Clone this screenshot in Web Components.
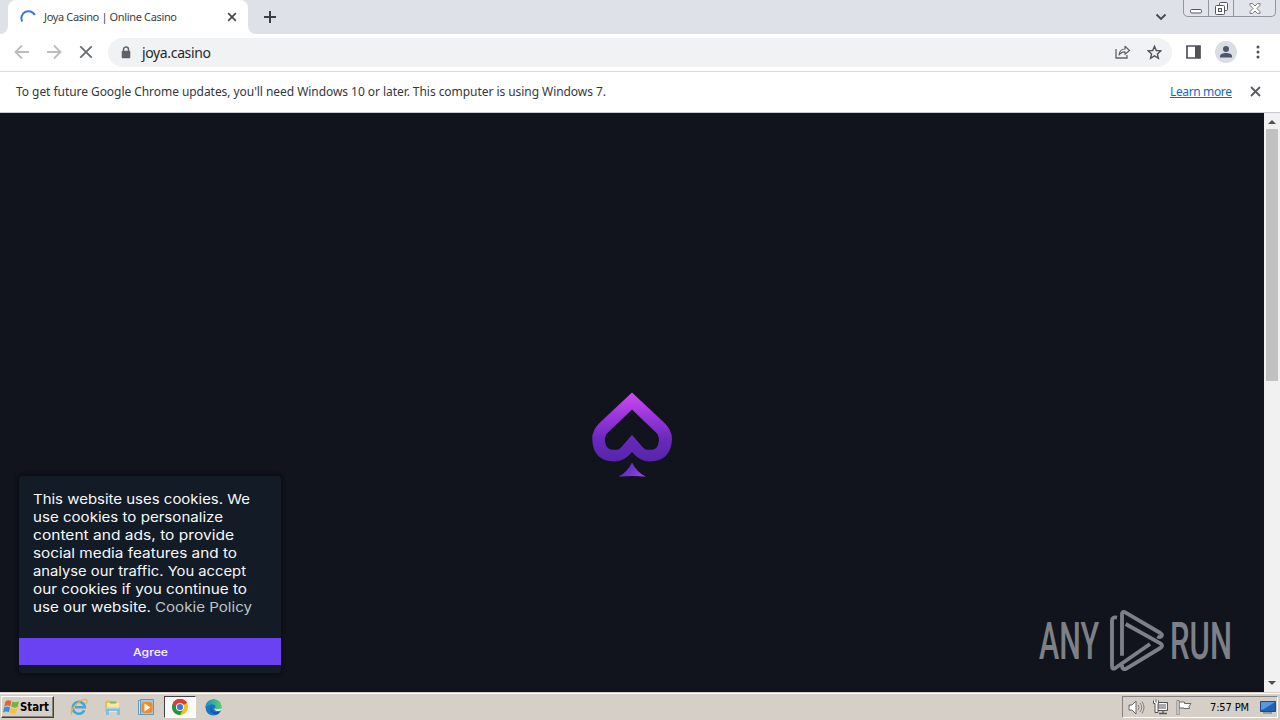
<!DOCTYPE html>
<html lang="en">
<head>
<meta charset="utf-8">
<title>Joya Casino | Online Casino</title>
<style>
  body {
    margin: 0;
    width: 1280px;
    height: 720px;
    overflow: hidden;
    font-family: "Noto Sans", sans-serif;
  }
</style>
</head>
<body>
<desktop-screen></desktop-screen>

<script>
(() => {
  const define = (name, html, setup) => {
    const template = document.createElement("template");
    template.innerHTML = html;
    customElements.define(name, class extends HTMLElement {
      constructor() {
        super();
        this.attachShadow({ mode: "open" });
      }
      connectedCallback() {
        if (this.shadowRoot.childNodes.length) return;
        this.shadowRoot.appendChild(template.content.cloneNode(true));
        if (setup) setup(this, this.shadowRoot);
      }
    });
  };

  // One line of text set to an exact width
  define("fit-text", `
<style>
  :host { display: block; flex: none; }
  svg { display: block; overflow: visible; }
  text { fill: currentColor; }
</style>
<svg><text x="0"></text></svg>
`, (host, root) => {
    const width = host.getAttribute("width");
    const height = host.getAttribute("height") ?? "18";
    const svg = root.querySelector("svg");
    svg.setAttribute("width", width);
    svg.setAttribute("height", height);
    const text = root.querySelector("text");
    text.setAttribute("y", host.getAttribute("base") ?? "13");
    text.setAttribute("textLength", width);
    text.setAttribute("lengthAdjust", host.hasAttribute("stretch") ? "spacingAndGlyphs" : "spacing");
    text.textContent = host.getAttribute("text");
  });

  const icons = {
    spinner: [16, 16, `<path d="M2.200 12.500A7 7 0 0 1 14.800 6" fill="none" stroke="#3b78d8" stroke-width="2"/>`],
    tabClose: [10, 10, `<path d="M1.200 1.200l7.600 7.600M8.800 1.200L1.200 8.800" stroke="#45484d" stroke-width="1.700"/>`],
    plus: [12, 12, `<path d="M6 0v12M0 6h12" stroke="#3c4043" stroke-width="2"/>`],
    chevron: [12, 8, `<path d="M1.500 1.500L6 6l4.500-4.500" fill="none" stroke="#45484d" stroke-width="1.900"/>`],
    back: [16, 16, `<path d="M15 8H2M8 1.500L1.500 8L8 14.500" fill="none" stroke="#babcbe" stroke-width="1.800"/>`],
    forward: [16, 16, `<path d="M1 8h13M8 1.500L14.500 8L8 14.500" fill="none" stroke="#babcbe" stroke-width="1.800"/>`],
    stop: [14, 14, `<path d="M1.300 1.300l11.400 11.400M12.700 1.300L1.300 12.700" stroke="#6a6d71" stroke-width="1.900"/>`],
    lock: [10, 13, `<path d="M2.500 6V3.500a2.500 2.500 0 0 1 5 0V6" fill="none" stroke="#5f6368" stroke-width="1.500"/><rect x=".7" y="4.800" width="8.600" height="7.400" rx="1" fill="#5f6368"/>`],
    share: [16, 14, `<path d="M1 4v9h11v-3" fill="none" stroke="#5f6368" stroke-width="1.300"/><path d="M4 10C4.400 6 6.500 4 10 4V1.300L14.500 5.500L10 9.300V6.800C7.500 6.800 5.500 7.700 4 10z" fill="none" stroke="#5f6368" stroke-width="1.200" stroke-linejoin="round"/>`],
    star: [15, 15, `<path d="M7.500 1.300l1.800 4.200 4.500.4-3.400 3 1 4.400-3.900-2.400-3.900 2.400 1-4.400-3.400-3 4.500-.4z" fill="none" stroke="#505459" stroke-width="1.400"/>`],
    panel: [15, 14, `<path d="M1 1h13v12H1z" fill="none" stroke="#505255" stroke-width="1.700"/><path d="M9 1h5v12H9z" fill="#505255"/>`],
    avatar: [22, 22, `<circle cx="11" cy="11" r="11" fill="#dadde1"/><circle cx="11" cy="8" r="3" fill="#4b5570"/><path d="M5 16.500v-1.200c0-2 3-3.200 6-3.200s6 1.200 6 3.200v1.200z" fill="#4b5570"/>`],
    dots: [4, 14, `<g fill="#505357"><circle cx="2" cy="2" r="1.500"/><circle cx="2" cy="7" r="1.500"/><circle cx="2" cy="12" r="1.500"/></g>`],
    barClose: [11, 11, `<path d="M1 1l9 9M10 1l-9 9" stroke="#5a5d61" stroke-width="1.900"/>`],
    minimise: [12, 6, `<rect x=".5" y=".5" width="11" height="3.500" rx="1.300" fill="#fff" stroke="#53565c"/>`],
    restore: [13, 13, `<rect x="4.500" y=".5" width="8" height="8" rx="1" fill="#f5f6f8" stroke="#53565c"/><rect x=".5" y="3.500" width="9" height="9" rx="1" fill="#fff" stroke="#53565c"/><rect x="3.500" y="6.500" width="3" height="3" fill="#e0e3e9" stroke="#53565c"/>`],
    winClose: [12, 11, `<path d="M1 .6h2.500L6 3 8.500.6H11v1.700L8 5.500l3 3.200v1.700H8.500L6 8l-2.500 2.400H1V8.700l3-3.200-3-3.200z" fill="#fff" stroke="#686b71" stroke-width=".9"/>`],
    up: [8, 4, `<path d="M4 0l4 4H0z" fill="#505050"/>`],
    down: [8, 4, `<path d="M0 0h8L4 4z" fill="#505050"/>`],
    spade: [84, 90, `
      <defs>
        <linearGradient id="g" x1="0" y1="0" x2="0" y2="1"><stop offset="0" stop-color="#cf4af2"/><stop offset=".35" stop-color="#9a35dc"/><stop offset=".68" stop-color="#6929bd"/><stop offset="1" stop-color="#5525a8"/></linearGradient>
        <linearGradient id="s" x1="0" y1="0" x2="1" y2=".5"><stop offset="0" stop-color="#4f35bd"/><stop offset=".5" stop-color="#6731cd"/><stop offset="1" stop-color="#9540df"/></linearGradient>
      </defs>
      <path fill="url(#g)" fill-rule="evenodd" d="M42 2.500L74 32.500Q82 40 82 49Q81 71 60 71.500Q49.500 71.500 42 62Q34.500 71.500 24 71.500Q3 71 2.200 49Q2 40 10 32.500zM42 19.500L18 42.500Q14.800 45.500 14.800 50Q15.500 59.500 22 59.800H27Q29 59.800 31 57.500L42 45L53 57.500Q55 59.800 57 59.800H62Q68.500 59.500 69 50Q69 45.500 66 42.500z"/>
      <path fill="url(#s)" d="M42 72.500Q47 82.500 56 86.800Q42 85 28.500 86.800Q37 82.500 42 72.500z"/>`],
    play: [75, 70, `<g transform="scale(.33333)" fill="none" stroke="#7d8087" stroke-width="11.500" stroke-linejoin="round"><path d="M66 152V28Q66 16 77 23L181 84Q190 90 183 95Q179 98 172 94"/><path d="M51 38Q36 35 36 47V183Q36 195 46 189L150 117"/><path d="M77 57L181 115Q191 122 181 129L79 191Q65 196 66 180"/></g>`],
    windows: [17, 16, `<path d="M2.500 2.500Q5 .5 8.300 2L7.300 7.200Q4 5.500 1.200 7.500z" fill="#e9622d"/><path d="M9.300 2.500Q12 4 16 2.500L14.600 8Q11 9.500 8.200 7.600z" fill="#72b53e"/><path d="M1 8.500Q4 6.700 7 8.300L6 13.300Q3 11.700 0 13.500z" fill="#3c8fdc"/><path d="M8 8.700Q11 10.300 14.300 9.200L13 14.200Q10 15.800 7 14z" fill="#f7c42c"/>`],
    ie: [18, 18, `<path d="M14.300 12.300A6 6 0 1 1 14.800 9.300H5" fill="none" stroke="#42a5dc" stroke-width="2.500"/><path d="M2 16.500C-1.500 13 11-1 16.500 1.800Q17.800 3 15.800 5.800" fill="none" stroke="#e2b641" stroke-width="1.300"/>`],
    folder: [17, 17, `<path d="M1 3Q1 1.500 2.500 1.500H6L7.500 3H13V13H1z" fill="#e7bd57"/><path d="M3 4h12v9H3z" fill="#fae69d"/><path d="M6 2.500h6v2H6z" fill="#76bd62"/><path d="M2 8.500h14V16h-3v-4H5v4H2z" fill="#80bfdf"/><path d="M2.500 9h13" stroke="#c5e7f5"/>`],
    media: [16, 17, `<path d="M.5 1.500h12v14H.5z" fill="#d2e9f8" stroke="#599bc9"/><path d="M2.500.5h13v15h-13z" fill="#9acbed" stroke="#5c9ac6"/><rect x="3.500" y="3" width="11" height="11" rx="3" fill="#f48b20"/><path d="M6.500 4.500l6 4-6 4z" fill="#fff"/>`],
    chrome: [16, 16, `<circle cx="8" cy="8" r="8" fill="#fbc116"/><path d="M8 8L1.070 4A8 8 0 0 1 14.930 4z" fill="#e33b2e"/><path d="M1.070 4A8 8 0 0 0 8 16l3.500-6L8 8z" fill="#229447"/><path d="M8 4h6.930A8 8 0 0 0 1.070 4l3.500 6z" fill="#e33b2e"/><circle cx="8" cy="8" r="4" fill="#fff"/><circle cx="8" cy="8" r="3.100" fill="#3978dd"/>`],
    edge: [17, 17, `<defs><linearGradient id="e"><stop stop-color="#178fd3"/><stop offset="1" stop-color="#5bd15b"/></linearGradient></defs><circle cx="8.500" cy="8.500" r="8" fill="#1976c5"/><path d="M.5 8.500C.500-2 16.500-2 16.500 7.500c0 3.500-4.500 4-6.500 2.500C12 7 9 4.800 6 5.500 3.500 6 1.500 7 .5 8.500z" fill="url(#e)"/><path d="M6.500 7C5.300 11.500 9 14.500 15 12.500c-.7 1-1.300 2-2.500 2.700C7 15.500 3.500 11.500 6.500 7z" fill="#1a52a5"/><path d="M9.500 6.700c2 .8 1.800 2-.2 3.300 1 2.300 4 2.600 6.700 1.200l1-1.400h-2c-2 .6-4 .5-5 .2 1.500-1.500 1-2.800-.5-3.300z" fill="#eef2f3"/>`],
    speaker: [17, 15, `<path d="M1 5h3l4-4v13l-4-4H1z" fill="#fff" stroke="#686868"/><path d="M10 5q2 2.500 0 5M12 3q3.500 4.500 0 9M14 1.500q4 6 0 12" fill="none" stroke="#777" stroke-width=".9"/>`],
    network: [17, 16, `<path d="M4.500 3.500h11v8h-11z" fill="#a9a9a9" stroke="#555"/><path d="M5.500 4.500h9v6h-9z" fill="none" stroke="#fff"/><path d="M7 14.500h8M11 12v2" stroke="#555" stroke-width="1.300"/><path d="M1.500 1.500v3H3v9h3v-9h.5v-3M4 .5v3" fill="#fff" stroke="#555"/>`],
    flag: [17, 15, `<path d="M3 2h5.500v1.500H15l-2 3 .5 2H8V8H3z" fill="#fff" stroke="#686868"/><path d="M1 .5h2V15H1z" fill="#fff" stroke="#686868" stroke-width=".8"/>`],
    desktop: [16, 14, `<path d="M.5 1.500h15v10H.5z" fill="#2262b5" stroke="#204a7d"/><path d="M1 2h14L4 9 1 10z" fill="#5799dc"/><path d="M3 13h9" stroke="#74818d" stroke-width="1.300"/>`],
  };

  define("ui-icon", `
<style>
  :host { display: block; flex: none; }
  svg { display: block; }
</style>
`, (host, root) => {
    const [w, h, shapes] = icons[host.getAttribute("name")];
    const holder = document.createElement("div");
    holder.innerHTML = `<svg width="${w}" height="${h}" viewBox="0 0 ${w} ${h}">${shapes}</svg>`;
    root.appendChild(holder);
  });

  define("tab-strip", `
<style>
  :host { display: flex; height: 34px; background: #dee1e8; }
  .edge { width: 8px; background: #fff; }
  .edge::before { content: ""; display: block; height: 34px; background: #dee1e8; }
  .left::before { border-bottom-right-radius: 8px; }
  .right::before { border-bottom-left-radius: 8px; }
  .tab {
    display: flex;
    align-items: center;
    box-sizing: border-box;
    width: 240px;
    padding: 0 11px 0 12px;
    background: #fff;
    border-radius: 8px 8px 0 0;
    color: #3c4043;
    font-size: 11px;
  }
  fit-text { margin: 0 auto 0 8px; }
  .plus { margin: 11px auto 0 8px; }
  .chevron { margin: 13px 16px 0 0; }
  .window {
    display: flex;
    box-sizing: border-box;
    width: 93px;
    height: 17px;
    margin-right: 4px;
    border: 1px solid #92969f;
    border-top: 0;
    border-radius: 0 0 5px 5px;
    background: #e1e4ea;
  }
  .window div { display: flex; justify-content: center; align-items: center; width: 24px; border-right: 1px solid #92969f; }
  .window div:last-child { flex: 1; border: 0; }
  .window div:first-child { align-items: end; padding-bottom: 1px; }
</style>
<div class="edge left"></div>
<div class="tab">
  <ui-icon name="spinner"></ui-icon>
  <fit-text text="Joya Casino | Online Casino" width="133" height="17" base="12"></fit-text>
  <ui-icon name="tabClose"></ui-icon>
</div>
<div class="edge right"></div>
<ui-icon class="plus" name="plus"></ui-icon>
<ui-icon class="chevron" name="chevron"></ui-icon>
<div class="window">
  <div><ui-icon name="minimise"></ui-icon></div>
  <div><ui-icon name="restore"></ui-icon></div>
  <div><ui-icon name="winClose"></ui-icon></div>
</div>
`);

  define("tool-bar", `
<style>
  :host {
    display: flex;
    align-items: center;
    box-sizing: border-box;
    height: 38px;
    padding: 0 20px 1px 14px;
    background: #fff;
    border-bottom: 1px solid #d9dbde;
  }
  .nav { display: flex; align-items: center; gap: 16px; width: 94px; }
  .stop { margin-left: 1px; }
  .address {
    display: flex;
    align-items: center;
    box-sizing: border-box;
    width: 1064px;
    height: 29px;
    padding: 0 10px 0 13px;
    border-radius: 15px;
    background: #f0f2f4;
    color: #25282b;
    font-size: 14px;
  }
  fit-text { margin: 0 auto 0 11px; }
  .star { margin-left: 16px; }
  .panel { margin: 0 14px; }
  .dots { margin-left: auto; }
</style>
<div class="nav">
  <ui-icon name="back"></ui-icon>
  <ui-icon name="forward"></ui-icon>
  <ui-icon class="stop" name="stop"></ui-icon>
</div>
<div class="address">
  <ui-icon name="lock"></ui-icon>
  <fit-text text="joya.casino" width="69" height="20" base="16"></fit-text>
  <ui-icon name="share"></ui-icon>
  <ui-icon class="star" name="star"></ui-icon>
</div>
<ui-icon class="panel" name="panel"></ui-icon>
<ui-icon name="avatar"></ui-icon>
<ui-icon class="dots" name="dots"></ui-icon>
`);

  define("info-bar", `
<style>
  :host {
    display: flex;
    align-items: center;
    box-sizing: border-box;
    height: 41px;
    padding: 0 18px 0 16px;
    background: #fff;
    border-bottom: 1px solid #c9cbd0;
    color: #35383b;
    font-size: 12px;
  }
  .link { margin: 0 0 2px auto; color: #1a68b8; border-bottom: 1px solid #1a68b8; }
  ui-icon { margin: 0 1px 1px 18px; }
</style>
<fit-text text="To get future Google Chrome updates, you'll need Windows 10 or later. This computer is using Windows 7." width="590" height="17" base="12"></fit-text>
<fit-text class="link" text="Learn more" width="62" height="13" base="12"></fit-text>
<ui-icon name="barClose"></ui-icon>
`);

  define("cookie-notice", `
<style>
  :host {
    display: block;
    box-sizing: border-box;
    width: 262px;
    height: 197px;
    padding-top: 14px;
    background: #131b26;
    border-radius: 3px;
    box-shadow: 0 0 4px 1px #080b10;
    color: #f8f9fa;
    font-family: Inter, "Noto Sans", sans-serif;
    font-size: 13.500px;
  }
  .copy { padding-left: 14px; height: 148px; }
  .last { display: flex; gap: 4px; }
  .policy { color: #bfc3c8; }
  .agree {
    display: flex;
    justify-content: center;
    align-items: center;
    height: 27px;
    background: #6b42f3;
    font-size: 11px;
    font-weight: 500;
  }
</style>
<div class="copy">
  <fit-text stretch text="This website uses cookies. We" width="217" base="14"></fit-text>
  <fit-text stretch text="use cookies to personalize" width="190" base="14"></fit-text>
  <fit-text stretch text="content and ads, to provide" width="201" base="14"></fit-text>
  <fit-text stretch text="social media features and to" width="204" base="14"></fit-text>
  <fit-text stretch text="analyse our traffic. You accept" width="213" base="14"></fit-text>
  <fit-text stretch text="our cookies if you continue to" width="214" base="14"></fit-text>
  <div class="last">
    <fit-text stretch text="use our website." width="118" base="14"></fit-text>
    <fit-text stretch class="policy" text="Cookie Policy" width="97" base="14"></fit-text>
  </div>
</div>
<div class="agree"><fit-text stretch text="Agree" width="35" height="16" base="12"></fit-text></div>
`);

  define("any-run-mark", `
<style>
  :host {
    display: flex;
    align-items: center;
    color: #7d8087;
    font-family: Roboto, sans-serif;
    font-size: 52px;
    font-weight: 500;
  }
  ui-icon { margin: 0 -5px 0 1px; }
</style>
<fit-text stretch text="ANY" width="60" height="70" base="54"></fit-text>
<ui-icon name="play"></ui-icon>
<fit-text stretch text="RUN" width="62" height="70" base="54"></fit-text>
`);

  define("page-scrollbar", `
<style>
  :host {
    display: flex;
    flex-direction: column;
    align-items: center;
    justify-content: space-between;
    box-sizing: border-box;
    width: 16px;
    padding: 7px 0;
    background: #f1f1f1;
  }
  .thumb { width: 12px; height: 252px; margin: 5px 0 auto; background: #c1c1c1; }
</style>
<ui-icon name="up"></ui-icon>
<div class="thumb"></div>
<ui-icon name="down"></ui-icon>
`);

  define("page-view", `
<style>
  :host { display: flex; height: 579px; }
  .page { position: relative; flex: 1; display: flex; justify-content: center; background: #11141d; }
  .logo { margin-top: 277px; }
  cookie-notice { position: absolute; left: 19px; top: 363px; }
  any-run-mark { position: absolute; left: 1039px; top: 492px; }
</style>
<div class="page">
  <ui-icon class="logo" name="spade"></ui-icon>
  <cookie-notice></cookie-notice>
  <any-run-mark></any-run-mark>
</div>
<page-scrollbar></page-scrollbar>
`);

  define("task-bar", `
<style>
  :host {
    display: flex;
    align-items: center;
    box-sizing: border-box;
    height: 28px;
    padding: 2px 2px 0 1px;
    background: #d5cfc7;
    box-shadow: inset 0 1px #d5cfc7, inset 0 2px #fff;
    color: #000;
    font-family: "DejaVu Sans Condensed", "DejaVu Sans", sans-serif;
    font-size: 11px;
  }
  .start {
    display: flex;
    align-items: center;
    box-sizing: border-box;
    width: 53px;
    height: 22px;
    padding-left: 1px;
    border: 1px solid;
    border-color: #fff #404040 #404040 #fff;
    box-shadow: inset -1px -1px #85817b;
    font-size: 12px;
    font-weight: bold;
  }
  .apps { display: flex; align-items: center; margin-left: 16px; }
  .apps .folder { margin-left: 16px; }
  .apps .media { margin: 0 10px 0 17px; }
  .active {
    display: flex;
    align-items: center;
    justify-content: center;
    box-sizing: border-box;
    width: 32px;
    height: 22px;
    margin-right: 9px;
    border: 1px solid;
    border-color: #404040 #fff #fff #404040;
    background: #fbfaf9;
  }
  .tray {
    display: flex;
    align-items: center;
    box-sizing: border-box;
    width: 156px;
    height: 22px;
    margin-left: auto;
    padding: 0 1px 0 5px;
    border: 1px solid;
    border-color: #85817b #fff #fff #85817b;
  }
  .tray .icons { display: flex; align-items: center; gap: 7px; }
  .tray fit-text { margin: 0 11px 0 auto; }
</style>
<div class="start">
  <ui-icon name="windows"></ui-icon>
  <fit-text stretch text="Start" width="29" height="16" base="12"></fit-text>
</div>
<div class="apps">
  <ui-icon name="ie"></ui-icon>
  <ui-icon class="folder" name="folder"></ui-icon>
  <ui-icon class="media" name="media"></ui-icon>
  <div class="active"><ui-icon name="chrome"></ui-icon></div>
  <ui-icon name="edge"></ui-icon>
</div>
<div class="tray">
  <div class="icons">
    <ui-icon name="speaker"></ui-icon>
    <ui-icon name="network"></ui-icon>
    <ui-icon name="flag"></ui-icon>
  </div>
  <fit-text text="7:57 PM" width="39" height="16" base="12"></fit-text>
  <ui-icon name="desktop"></ui-icon>
</div>
`);

  define("desktop-screen", `
<style>
  :host { display: flex; flex-direction: column; width: 1280px; height: 720px; }
</style>
<tab-strip></tab-strip>
<tool-bar></tool-bar>
<info-bar></info-bar>
<page-view></page-view>
<task-bar></task-bar>
`);
})();
</script>
</body>
</html>
